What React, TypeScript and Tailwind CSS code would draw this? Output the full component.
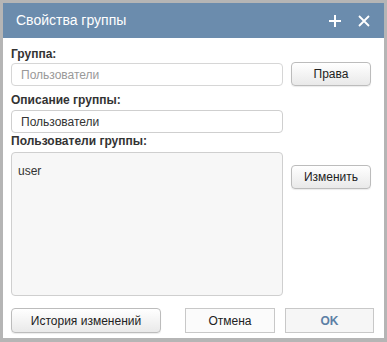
import React from 'react';

const font = { fontFamily: '"Liberation Sans", Arial, sans-serif' };

function GradButton({ children, className = '' }: { children: React.ReactNode; className?: string }) {
  return (
    <button
      className={`h-[24px] w-[80px] rounded-[4px] border border-[#bcbcbc] bg-gradient-to-b from-white to-[#e9e9e9] text-[12px] text-[#222] shadow-[0_1px_1px_rgba(0,0,0,0.08)] ${className}`}
    >
      {children}
    </button>
  );
}

export default function App() {
  return (
    <div className="w-[387px] h-[342px] bg-[#b5b5b5] p-[3px] pb-[4px]" style={font}>
      <div className="flex h-full flex-col bg-white">
        {/* Header */}
        <div className="flex h-[35px] shrink-0 items-center bg-[#6b8cad] pl-[13px] pr-[14px]">
          <span className="flex-1 text-[14px] text-white">Свойства группы</span>
          <svg width="14" height="14" viewBox="0 0 14 14" className="mr-[16px]">
            <path d="M7 1v12M1 7h12" stroke="white" strokeWidth="2" />
          </svg>
          <svg width="12" height="12" viewBox="0 0 12 12">
            <path d="M1 1l10 10M11 1L1 11" stroke="white" strokeWidth="1.8" />
          </svg>
        </div>

        {/* Body */}
        <div className="flex flex-1 flex-col pl-[8px] pr-[10px] pt-[8px]">
          <div className="text-[12px] font-bold leading-[16px] text-[#333]">Группа:</div>
          <div className="flex items-end gap-[8px]">
            <div className="flex h-[23px] w-[272px] items-center rounded-[4px] border border-[#d6d6d6] pl-[9px] text-[12px] text-[#999]">
              Пользователи
            </div>
            <GradButton>Права</GradButton>
          </div>

          <div className="mt-[6px] text-[12px] font-bold leading-[16px] text-[#333]">Описание группы:</div>
          <div className="mt-[2px] flex h-[23px] w-[272px] items-center rounded-[4px] border border-[#cfcfcf] pl-[9px] text-[12px] text-[#333]">
            Пользователи
          </div>

          <div className="text-[12px] font-bold leading-[16px] text-[#333]">Пользователи группы:</div>
          <div className="mt-[3px] flex items-start gap-[8px]">
            <div className="h-[144px] w-[272px] rounded-[4px] border border-[#cfcfcf] bg-[#f7f7f7] pl-[6px] pt-[9px] text-[12px] text-[#333]">
              user
            </div>
            <GradButton className="mt-[13px]">Изменить</GradButton>
          </div>

          <div className="mt-[12px] flex items-center">
            <GradButton className="h-[25px] w-[150px]">История изменений</GradButton>
            <button className="ml-[24px] h-[25px] w-[90px] border border-[#c8c8c8] bg-[#fbfbfb] text-[12px] text-[#222]">
              Отмена
            </button>
            <button className="ml-[10px] h-[25px] w-[89px] border border-[#c8c8c8] bg-[#f6f6f6] text-[12px] font-bold text-[#5c7fa5]">
              OK
            </button>
          </div>
        </div>
      </div>
    </div>
  );
}
